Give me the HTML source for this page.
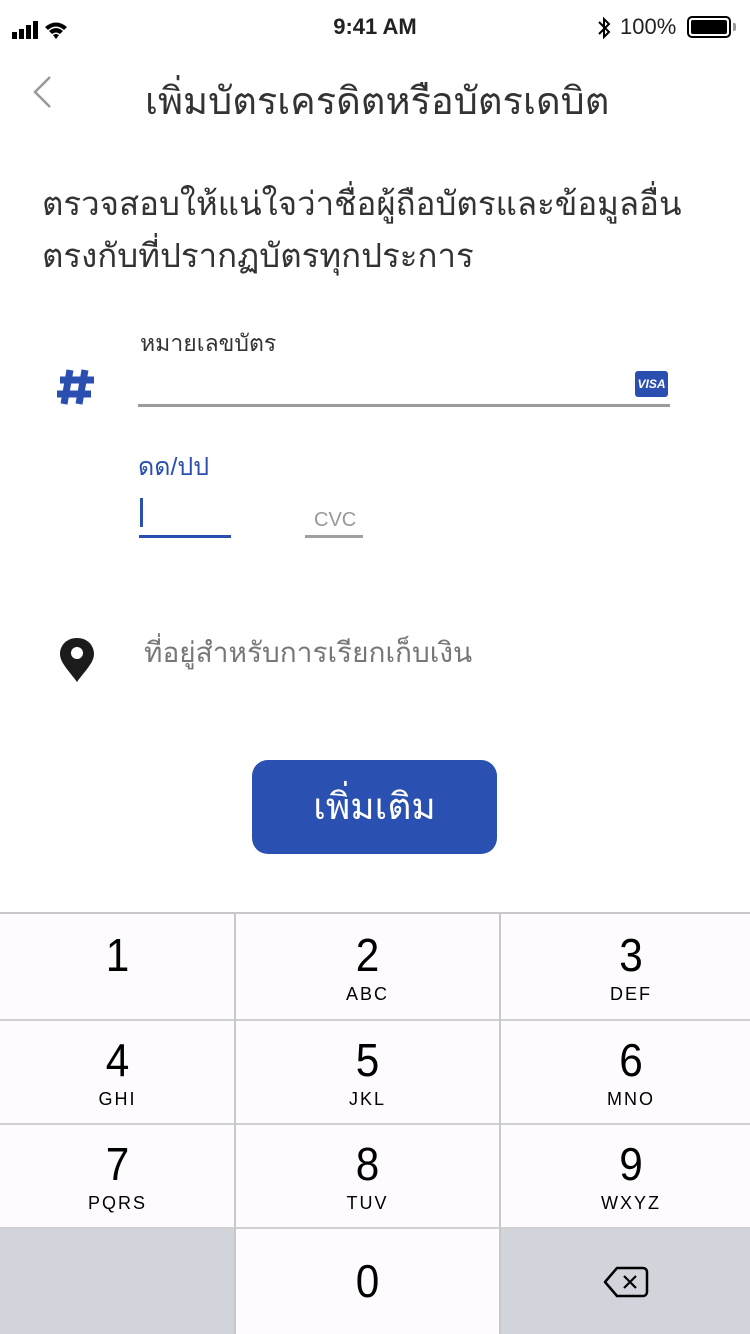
<!DOCTYPE html>
<html><head><meta charset="utf-8">
<style>
*{margin:0;padding:0;box-sizing:border-box}
body{width:750px;height:1334px;background:#fff;font-family:"Liberation Sans","DejaVu Sans",sans-serif;position:relative;overflow:hidden;color:#222}
.abs{position:absolute}
.kb{position:absolute;left:0;top:912px;width:750px;height:422px;background:#fdfbfd;border-top:2px solid #c8c8cc}
.key{position:absolute;text-align:center;color:#000}
.key .n{font-size:46px;line-height:46px;display:block;transform:scaleX(0.92)}
.key .l{font-size:18px;letter-spacing:2px;display:block;margin-top:6px}
.hl{position:absolute;left:0;width:750px;height:2px;background:#d0d0d4}
.vl{position:absolute;width:2px;background:#c8c8cc}
</style></head><body>
<div class="abs" style="left:12px;top:20px">
<svg width="70" height="20"><rect x="0" y="12" width="5" height="7" fill="#000"/><rect x="7" y="9" width="5" height="10" fill="#000"/><rect x="14" y="5" width="5" height="14" fill="#000"/><rect x="21" y="1" width="5" height="18" fill="#000"/>
<path d="M33 7 Q44 -2 55 7 L52 10 Q44 3 36 10Z M37 11 Q44 5 51 11 L48 14 Q44 11 40 14Z M41 15 Q44 13 47 15 L44 19Z" fill="#000"/></svg></div>
<div class="abs" style="left:0;width:750px;top:14px;text-align:center;font-size:22px;font-weight:bold">9:41 AM</div>
<svg class="abs" style="left:596px;top:15px" width="16" height="26"><path d="M3 7 L13 17 L8 22 V4 L13 9 L3 19" stroke="#000" stroke-width="2" fill="none"/></svg>
<div class="abs" style="left:620px;top:14px;font-size:22px">100%</div>
<div class="abs" style="left:687px;top:16px;width:44px;height:22px;border:2px solid #000;border-radius:5px;padding:2px"><div style="background:#000;width:100%;height:100%;border-radius:2px"></div></div>
<div class="abs" style="left:733px;top:23px;width:3px;height:8px;background:#999;border-radius:0 2px 2px 0"></div>
<svg class="abs" style="left:30px;top:75px" width="24" height="34"><path d="M20 2 L5 17 L20 32" stroke="#999" stroke-width="2.5" fill="none"/></svg>
<div class="abs" style="left:145px;top:70px;font-size:38px;color:#333">เพิ่มบัตรเครดิตหรือบัตรเดบิต</div>
<div class="abs" style="left:42px;top:178px;font-size:33px;line-height:52px;color:#333">ตรวจสอบให้แน่ใจว่าชื่อผู้ถือบัตรและข้อมูลอื่น<br>ตรงกับที่ปรากฏบัตรทุกประการ</div>
<div class="abs" style="left:140px;top:326px;font-size:23px;color:#333">หมายเลขบัตร</div>
<svg class="abs" style="left:56px;top:369px" width="40" height="36"><path d="M14 1 L8 35 M29 1 L23 35 M4 11 H38 M1 25 H35" stroke="#2a4fb0" stroke-width="7" fill="none"/></svg>
<div class="abs" style="left:635px;top:371px;width:33px;height:26px;background:#2a4fb0;border-radius:3px;color:#fff;font-size:12px;font-weight:bold;font-style:italic;text-align:center;line-height:26px">VISA</div>
<div class="abs" style="left:138px;top:404px;width:532px;height:3px;background:#9b9b9b"></div>
<div class="abs" style="left:138px;top:447px;font-size:25px;color:#2a4fb0">ดด/ปป</div>
<div class="abs" style="left:140px;top:498px;width:3px;height:29px;background:#2a4fb0"></div>
<div class="abs" style="left:139px;top:535px;width:92px;height:3px;background:#2a4fb0"></div>
<div class="abs" style="left:314px;top:509px;font-size:20px;color:#999">CVC</div>
<div class="abs" style="left:305px;top:535px;width:58px;height:3px;background:#a0a0a0"></div>
<svg class="abs" style="left:58px;top:636px" width="40" height="48"><path d="M19 2 C8 2 2 10 2 18 C2 27 12 36 19 46 C26 36 36 27 36 18 C36 10 30 2 19 2Z" fill="#1b1b1b"/><circle cx="19" cy="17" r="6" fill="#fff"/></svg>
<div class="abs" style="left:144px;top:631px;font-size:28px;color:#777">ที่อยู่สำหรับการเรียกเก็บเงิน</div>
<div class="abs" style="left:252px;top:760px;width:245px;height:94px;background:#2a50b1;border-radius:16px;color:#fff;font-size:37px;text-align:center;line-height:94px">เพิ่มเติม</div>
<div class="kb"></div>
<div class="abs" style="left:0;top:1228px;width:235px;height:106px;background:#d1d4da"></div>
<div class="abs" style="left:501px;top:1228px;width:249px;height:106px;background:#d1d4da"></div>
<div class="hl" style="top:1019px"></div>
<div class="hl" style="top:1123px"></div>
<div class="hl" style="top:1227px"></div>
<div class="vl" style="left:234px;top:914px;height:420px"></div>
<div class="vl" style="left:499px;top:914px;height:420px"></div>
<div class="key" style="left:0;width:235px;top:932px"><span class="n">1</span></div>
<div class="key" style="left:235px;width:265px;top:932px"><span class="n">2</span><span class="l">ABC</span></div>
<div class="key" style="left:500px;width:262px;top:932px"><span class="n">3</span><span class="l">DEF</span></div>
<div class="key" style="left:0;width:235px;top:1037px"><span class="n">4</span><span class="l">GHI</span></div>
<div class="key" style="left:235px;width:265px;top:1037px"><span class="n">5</span><span class="l">JKL</span></div>
<div class="key" style="left:500px;width:262px;top:1037px"><span class="n">6</span><span class="l">MNO</span></div>
<div class="key" style="left:0;width:235px;top:1141px"><span class="n">7</span><span class="l">PQRS</span></div>
<div class="key" style="left:235px;width:265px;top:1141px"><span class="n">8</span><span class="l">TUV</span></div>
<div class="key" style="left:500px;width:262px;top:1141px"><span class="n">9</span><span class="l">WXYZ</span></div>
<div class="key" style="left:235px;width:265px;top:1258px"><span class="n">0</span></div>
<svg class="abs" style="left:603px;top:1266px" width="46" height="32"><path d="M14 2 H40 a4 4 0 0 1 4 4 V26 a4 4 0 0 1 -4 4 H14 L2 16Z" fill="none" stroke="#000" stroke-width="2.5" stroke-linejoin="round"/><path d="M21 10 L33 22 M33 10 L21 22" stroke="#000" stroke-width="2.2"/></svg>
</body></html>
